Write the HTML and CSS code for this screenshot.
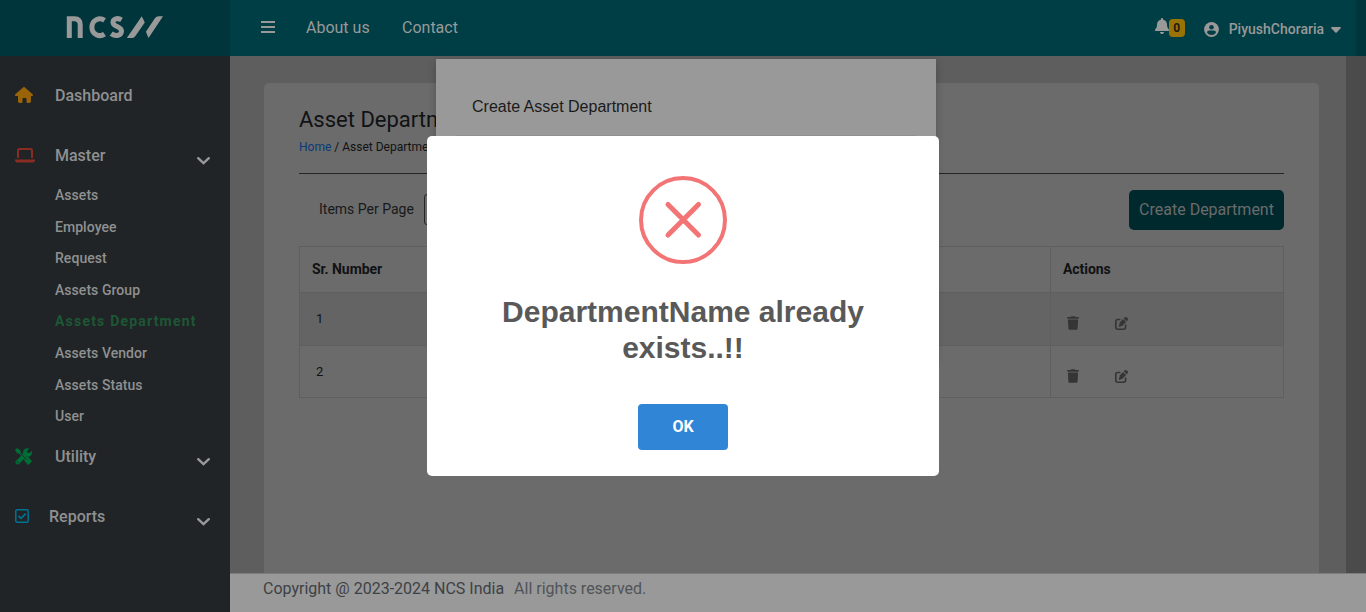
FILE: index.html
```html
<!DOCTYPE html>
<html lang="en">
<head>
<meta charset="utf-8">
<title>Asset Department</title>
<link rel="stylesheet" href="styles.css">
</head>
<body>
<svg class="defs" width="0" height="0" aria-hidden="true">
  <symbol id="chevron" viewBox="0 0 13 8"><path d="M1.2 1.2 6.5 6.2 11.8 1.2" fill="none" stroke="currentColor" stroke-width="2.4" stroke-linecap="round"/></symbol>
  <symbol id="trash" viewBox="0 0 448 512"><path fill="currentColor" d="M135 18 128 32H32C14 32 0 46 0 64s14 32 32 32h384c18 0 32-14 32-32s-14-32-32-32h-96l-7-14C307 7 296 0 284 0H164c-12 0-23 7-29 18zM416 128H32l21 339c2 25 23 45 48 45h246c25 0 46-20 48-45z"/></symbol>
  <symbol id="edit" viewBox="0 0 512 512"><path fill="currentColor" d="M472 22l18 18c28 28 28 72 0 100l-30 30L342 52l30-30c28-28 72-28 100 0zM172 222 320 74l118 118-148 148c-6 6-14 11-22 14l-89 29c-9 3-18 1-25-6s-9-16-6-25l30-88c2-9 7-16 14-22zM96 64h96c18 0 32 14 32 32s-14 32-32 32H96c-18 0-32 14-32 32v256c0 18 14 32 32 32h256c18 0 32-14 32-32v-96c0-18 14-32 32-32s32 14 32 32v96c0 53-43 96-96 96H96c-53 0-96-43-96-96V160c0-53 43-96 96-96z"/></symbol>
</svg>
<div class="app">
  <aside class="sidebar">
    <div class="brand">
      <svg width="97" height="24" viewBox="0 0 97 24" role="img" aria-label="NCS">
        <g fill="none" stroke="currentColor" stroke-width="5">
          <path d="M3.300 23V3.700H8.500q5.700 0 5.700 6V23"/>
          <path d="M38.500 5.300C33.500 2 25.900 4.800 25.900 12.200c0 7.400 7.600 10.300 12.600 6.900"/>
          <path d="M55.500 4.800C51.500 2.400 47 4 47 7.400c0 4.600 8.500 3.600 8.500 8.600 0 4.500-5.600 6-10.300 2.600"/>
        </g>
        <path fill="currentColor" d="M60.800 23 75.800 1.300l3 6.300-9.200 13.200q-1.500 2.200-3.400 2.200zM79.900 16.800 88.900 3.200q1.400-2 3.800-2H97L82.500 23z"/>
      </svg>
    </div>
    <nav class="menu">
      <a class="item"><svg class="ico home" width="18" height="16" viewBox="0 0 576 512"><path fill="currentColor" d="M575 256c0 18-15 32-32 32h-32v160c1 36-28 64-56 64h-47c-22 0-40-18-40-40v-88c0-18-14-32-32-32h-64c-18 0-32 14-32 32v88c0 22-18 40-40 40h-48c-32 0-56-25-56-56V288H32c-18 0-32-14-32-32 0-9 3-17 10-24L266 8c7-7 15-8 22-8s15 2 21 7l255 225c8 7 12 15 11 24z"/></svg><span class="label">Dashboard</span></a>
      <a class="item"><svg class="ico laptop" width="20" height="15" viewBox="0 0 20 15"><path d="M3 10V2.500Q3 1 4.500 1h11Q17 1 17 2.500V10" fill="none" stroke="currentColor" stroke-width="2"/><path d="M0 11.400h20v.4q0 2.600-2.400 2.600H2.400Q0 14.400 0 11.800z" fill="currentColor"/></svg><span class="label">Master</span><svg class="arrow" width="13" height="8"><use href="#chevron"/></svg></a>
      <div class="sub">
        <a>Assets</a><a>Employee</a><a>Request</a><a>Assets Group</a><a class="active">Assets Department</a><a>Assets Vendor</a><a>Assets Status</a><a>User</a>
      </div>
      <a class="item"><svg class="ico tools" width="17" height="17" viewBox="0 0 17 17"><path d="M2.200 2.200 14 14" stroke="currentColor" stroke-width="2"/><path d="M0 2 2 0l3.400 2.200v1.800L4.100 5.400H2.300zM9.300 10.800l2-2 1.900.3 3 3.100q1 1 0 2l-1.900 2q-1 1-2 0L9.500 13z" fill="currentColor"/><path d="M2.700 14.300 11 6" stroke="currentColor" stroke-width="4.400" stroke-linecap="round"/><path d="M14.400.4 12 2.900v2.200h2.200l2.500-2.400q1.200 5-3 6Q8.500 8.500 8 4.800 8.200-.8 14.400.4z" fill="currentColor"/><circle cx="2.700" cy="14.200" r=".8" fill="#202426"/><path d="M5.500 5.400 11.500 11.600" stroke="#202426" stroke-width=".8"/></svg><span class="label">Utility</span><svg class="arrow" width="13" height="8"><use href="#chevron"/></svg></a>
      <a class="item report"><svg class="ico check" width="14" height="14" viewBox="0 0 14 14" fill="none" stroke="currentColor"><rect x=".8" y=".8" width="12.400" height="12.400" rx="1.300" stroke-width="1.500"/><path d="M3.500 6.900 6 9.300 10.700 4.600" stroke-width="1.800"/></svg><span class="label">Reports</span><svg class="arrow" width="13" height="8"><use href="#chevron"/></svg></a>
    </nav>
  </aside>
  <div class="main">
    <header class="topbar">
      <svg class="burger" width="14" height="12" viewBox="0 0 14 12"><path d="M0 1h14M0 6h14M0 11h14" stroke="currentColor" stroke-width="2"/></svg>
      <a class="about">About us</a><a class="contact">Contact</a>
      <div class="user">
        <svg class="bell" width="14" height="16" viewBox="0 0 448 512"><path fill="currentColor" d="M224 0c-18 0-32 14-32 32v19C119 66 64 131 64 208v19c0 47-17 92-48 127l-8 9c-8 9-10 23-5 34s16 19 29 19h384c13 0 24-8 29-19s3-25-5-34l-8-9c-31-35-48-80-48-127v-19c0-77-55-142-128-157V32c0-18-14-32-32-32zm45 493c12-12 19-28 19-45H160c0 17 7 33 19 45s28 19 45 19 33-7 45-19z"/></svg>
        <span class="badge">0</span>
        <svg class="avatar" width="15" height="15" viewBox="0 0 15 15"><circle cx="7.500" cy="7.500" r="7.400" fill="currentColor"/><circle cx="7.500" cy="5.300" r="2.300" fill="#003e45"/><path d="M3 10.800q0-2.200 2.300-2.200h4.400q2.300 0 2.300 2.200-1.600 2.200-4.500 2.200T3 10.800z" fill="#003e45"/></svg>
        <span class="uname">PiyushChoraria</span>
        <svg class="caret" width="10" height="6" viewBox="0 0 10 6"><path d="M.8 0h8.400q1.100.2.400 1.200L5.700 5.500q-.7.700-1.400 0L.4 1.200Q-.3.200.8 0z" fill="currentColor"/></svg>
      </div>
    </header>
    <div class="content">
      <section class="card">
        <h1>Asset Department</h1>
        <div class="crumb"><a>Home</a> / Asset Department</div>
        <div class="tools-row"><span class="per-page">Items Per Page</span><span class="select"></span><span class="create">Create Department</span></div>
        <table>
          <thead><tr><th>Sr. Number</th><th></th><th>Actions</th></tr></thead>
          <tbody>
            <tr class="first"><td>1</td><td></td><td><div class="acts"><svg width="12" height="14"><use href="#trash"/></svg><svg width="13" height="13"><use href="#edit"/></svg></div></td></tr>
            <tr><td>2</td><td></td><td><div class="acts"><svg width="12" height="14"><use href="#trash"/></svg><svg width="13" height="13"><use href="#edit"/></svg></div></td></tr>
          </tbody>
        </table>
      </section>
    </div>
    <footer><span class="copy">Copyright @ 2023-2024 NCS India</span><span>All rights reserved.</span></footer>
  </div>
</div>
<div class="drawer"><div class="drawer-title">Create Asset Department</div><div class="drawer-rule"></div></div>
<div class="alert" role="alertdialog">
  <svg width="88" height="88" viewBox="0 0 88 88" fill="none" stroke="#f27474"><circle cx="44" cy="44" r="42" stroke-width="4"/><path d="M29 28.500 59.500 59M59.500 28.500 29 59" stroke-width="5" stroke-linecap="round"/></svg>
  <h2>DepartmentName already exists..!!</h2>
  <button>OK</button>
</div>
</body>
</html>
```
FILE: styles.css
```css
* { box-sizing: border-box; }
body { margin: 0; height: 612px; overflow: hidden; font-family: Roboto, sans-serif; color: #101214; background: #5e5e5e; }
.defs { position: absolute; }
.app { display: flex; height: 612px; }
svg { flex: none; display: block; }

.sidebar { width: 230px; flex: none; background: #202426; color: #999; }
.brand { height: 56px; background: #00353b; padding: 15px 0 0 66px; color: #999; }
.menu { padding-top: 9px; }
.item { display: flex; height: 60px; align-items: center; padding: 0 20.5px 0 15px; font-size: 16px; font-weight: 500; color: #8f9091; }
.item .label { flex: 1; line-height: 20px; padding-top: 2px; }
.ico { margin-right: 22px; }
.ico.laptop { margin-right: 20px; }
.ico.tools { margin: 1px 23px 0 0; }
.ico.check { margin: 0 20px 0 0; }
.home { color: #99630a; }
.laptop { color: #8b2c22; }
.tools { color: #006c36; }
.check { color: #007291; }
.arrow { color: #999; margin-top: 12px; }
.sub { margin: -6px 0; padding-left: 55px; display: grid; grid-auto-rows: 31.6px; font-size: 14px; font-weight: 500; line-height: 32px; letter-spacing: 0.05px; color: #8f9091; }
.sub .active { color: #1d5735; font-weight: 700; letter-spacing: 1.2px; }

.main { flex: 1; display: flex; flex-direction: column; min-width: 0; }
.topbar { height: 56px; flex: none; display: flex; align-items: center; background: #003e45; color: #999; padding: 0 15px 2px 31px; border-right: 10px solid #00353b; font-size: 16px; }
.about { margin-left: 31px; width: 96px; }
.user { margin-left: auto; display: flex; align-items: center; font-size: 14px; font-weight: 500; padding-top: 4px; }
.bell { margin-top: -6px; }
.badge { width: 16px; height: 18px; border-radius: 4px; background: #997404; color: #1d1b10; font-size: 12px; font-weight: 700; text-align: center; line-height: 18px; margin-top: -2px; }
.avatar { margin: 0 10px 0 19px; }
.uname { margin-right: 7px; }
.caret { margin-top: 2px; }
.content { flex: 1; min-height: 0; padding: 27px 27px 0 34px; border-right: 20px solid #4b4b4b; }
.card { height: 490px; background: #6b6b6b; border-radius: 5px 5px 0 0; padding: 23px 35px 0; }
h1 { font-size: 22px; line-height: 28px; font-weight: 400; margin: 0; }
.crumb { font-size: 12px; line-height: 18px; padding: 4px 0 17px; height: 40px; border-bottom: 1px solid #252627; }
.crumb a { color: #0a3a78; }
.tools-row { display: flex; align-items: center; height: 72px; padding-left: 20px; font-size: 14px; color: #17191b; }
.per-page { padding-bottom: 2px; }
.select { width: 60px; height: 31px; border: 1px solid #252627; border-radius: 3px; margin: 0 0 2px 10px; }
.create { margin-left: auto; width: 155px; height: 40px; line-height: 39px; border-radius: 5px; background: #00292e; color: #6b6b6b; text-align: center; font-size: 16px; }
table { width: 985px; border-collapse: collapse; table-layout: fixed; font-size: 14px; }
th, td { border: 1px solid #5f5f5f; border-width: 1px 0; text-align: left; padding: 0 12px; }
th:first-child, td:first-child { width: 234px; border-left-width: 1px; }
th:last-child, td:last-child { width: 233px; border-left-width: 1px; border-right-width: 1px; }
th { height: 46px; font-weight: 700; padding-bottom: 2px; letter-spacing: -0.05px; }
td { height: 52px; font-size: 13px; padding: 0 16px; }
tr.first td { background: #646464; height: 53px; padding-bottom: 2px; }
.acts { display: flex; align-items: center; gap: 36px; padding-top: 9px; color: #353535; }
.first .acts { padding-top: 10px; }
footer { height: 39px; flex: none; background: #999; border-top: 1px solid #7d7d7d; padding: 5px 33px; line-height: 20px; font-size: 16px; color: #505458; }
.copy { margin-right: 10px; color: #3d4145; }

.drawer { position: absolute; left: 436px; top: 59px; width: 500px; height: 300px; background: #999; box-shadow: 0 3px 8px rgba(0,0,0,.22); padding: 37px 20px; }
.drawer-title { font-family: "Liberation Sans", sans-serif; font-size: 16px; line-height: 22px; color: #1b1b1b; padding-left: 16px; }
.drawer-rule { margin-top: 17px; border-top: 1px solid #8f8f8f; }
.alert { position: absolute; left: 427px; top: 136px; width: 512px; height: 340px; border-radius: 5px; background: #fff; padding: 40px 45px 0; display: flex; flex-direction: column; align-items: center; }
.alert h2 { margin: 30px 0 0; font-family: "Liberation Sans", sans-serif; font-size: 30px; line-height: 36px; font-weight: 700; color: #595959; text-align: center; }
.alert button { margin-top: 38px; width: 90px; height: 46px; border: 0; border-radius: 4px; background: #3085d6; color: #fff; padding: 0 6px 2px; font: 700 16px Roboto, sans-serif; }
```
